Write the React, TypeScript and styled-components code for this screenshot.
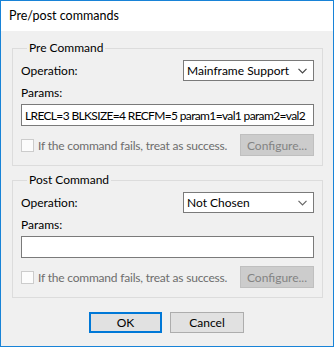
import styled, { createGlobalStyle } from 'styled-components'

const GlobalStyle = createGlobalStyle`
    html, body{
        margin: 0;
        padding: 0;
        background: #ffffff;
    }
    body{
        font-family: Lato, "Noto Sans", "Liberation Sans", sans-serif;
        font-size: 12px;
        color: #000;
    }
`

const Window = styled.div`
    width: 334px;
    height: 347px;
    box-sizing: border-box;
    border: 1px solid #1883d7;
    display: flex;
    flex-direction: column;
    background: #f0f0f0;
    overflow: hidden;
`

const TitleBar = styled.div`
    flex-shrink: 0;
    height: 30px;
    background: #ffffff;
    display: flex;
    align-items: center;
    padding-left: 8px;
    font-size: 12.5px;
    padding-bottom: 1px;
    box-sizing: border-box;
`

const Body = styled.div`
    display: flex;
    flex-direction: column;
    padding: 9px 10px 0 11px;
`

const Group = styled.fieldset<{ $top?: number }>`
    margin: ${p => p.$top ?? 0}px 0 0 0;
    padding: 4px 8px 9px 8px;
    border: 1px solid #dcdcdc;
    display: flex;
    flex-direction: column;
    min-width: 0;
`

const Legend = styled.legend`
    margin-left: 6px;
    padding: 0 2px;
    line-height: 16px;
    height: 16px;
`

const Row = styled.div`
    display: flex;
    align-items: center;
    justify-content: space-between;
`

const Label = styled.div<{ $mt?: number }>`
    line-height: 16px;
    margin-top: ${p => p.$mt ?? 0}px;
`

const Select = styled.div`
    width: 131px;
    height: 21px;
    box-sizing: border-box;
    border: 1px solid #7a7a7a;
    background: #fff;
    display: flex;
    align-items: center;
    justify-content: space-between;
    padding: 0 6px 0 3px;
    white-space: nowrap;
    svg{
        display: block;
        flex-shrink: 0;
    }
`

const TextBox = styled.div`
    margin-top: 3px;
    height: 22px;
    box-sizing: border-box;
    border: 1px solid #7a7a7a;
    background: #fff;
    display: flex;
    align-items: center;
    padding: 0 3px;
    white-space: nowrap;
    overflow: hidden;
    letter-spacing: -0.65px;
`

const CheckRow = styled(Row)`
    margin-top: 8px;
`

const CheckLabel = styled.label`
    display: flex;
    align-items: center;
    gap: 4px;
    color: #6d6d6d;
    white-space: nowrap;
    letter-spacing: -0.2px;
`

const CheckBox = styled.span`
    width: 13px;
    height: 13px;
    box-sizing: border-box;
    border: 1px solid #cccccc;
    background: #fcfcfc;
`

const Button = styled.button<{ $default?: boolean }>`
    font: inherit;
    color: #000;
    width: ${p => p.$default ? 73 : 74}px;
    height: 21px;
    box-sizing: border-box;
    background: #e1e1e1;
    border: ${p => p.$default ? '2px solid #0078d7' : '1px solid #adadad'};
    padding: 0;
    &:disabled{
        background: #cccccc;
        border: 1px solid #bfbfbf;
        color: #838383;
    }
`

const ConfigureButton = styled(Button)`
    width: 74px;
    height: 22px;
`

const Footer = styled.div`
    display: flex;
    justify-content: center;
    gap: 8px;
    margin-top: 14px;
    padding-right: 2px;
`

const Chevron = ({ color }: { color: string }) => (
    <svg width="9" height="6" viewBox="0 0 9 6">
        <polyline points="0.5,0.8 4.5,4.8 8.5,0.8" fill="none" stroke={color} strokeWidth="1.2" />
    </svg>
)

interface CommandProps{
    title: string
    operation: string
    params: string
    top?: number
    chevron: string
}

const CommandGroup = ({ title, operation, params, top, chevron }: CommandProps) => (
    <Group $top={top}>
        <Legend>{title}</Legend>
        <Row>
            <Label>Operation:</Label>
            <Select>
                <span>{operation}</span>
                <Chevron color={chevron} />
            </Select>
        </Row>
        <Label $mt={4}>Params:</Label>
        <TextBox>{params}</TextBox>
        <CheckRow>
            <CheckLabel>
                <CheckBox />
                If the command fails, treat as success.
            </CheckLabel>
            <ConfigureButton disabled>Configure...</ConfigureButton>
        </CheckRow>
    </Group>
)

export default function App(){
    return(
        <>
        <GlobalStyle />
        <Window>
            <TitleBar>Pre/post commands</TitleBar>
            <Body>
                <CommandGroup
                    title="Pre Command"
                    operation="Mainframe Support"
                    params="LRECL=3 BLKSIZE=4 RECFM=5 param1=val1 param2=val2"
                    chevron="#444" />
                <CommandGroup
                    title="Post Command"
                    operation="Not Chosen"
                    params=""
                    top={6}
                    chevron="#666" />
                <Footer>
                    <Button $default>OK</Button>
                    <Button>Cancel</Button>
                </Footer>
            </Body>
        </Window>
        </>
    )
}
